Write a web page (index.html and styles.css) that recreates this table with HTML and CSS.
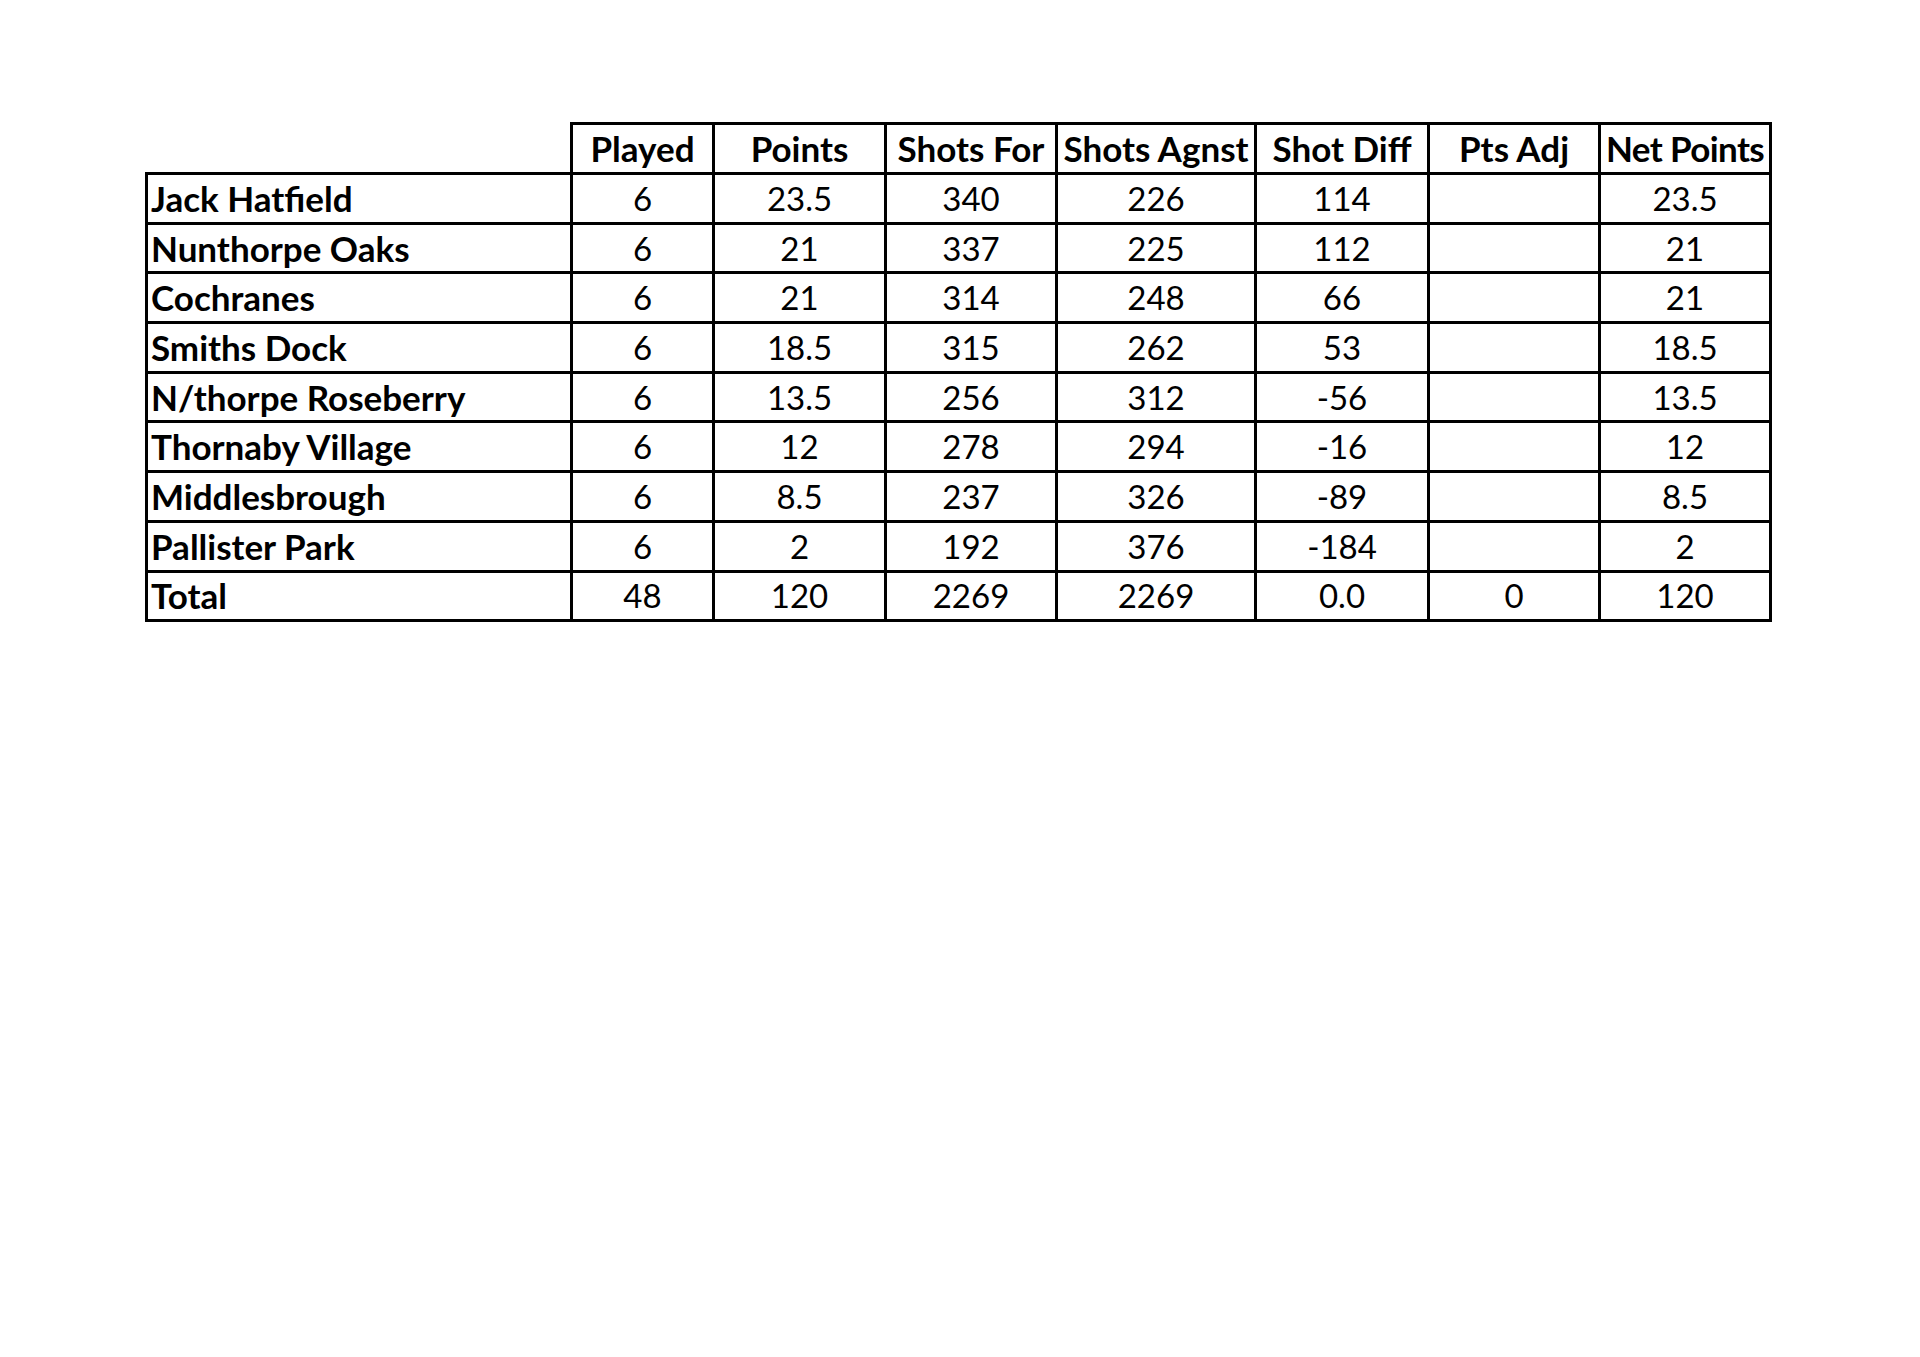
FILE: index.html
```html
<!DOCTYPE html>
<html lang="en">
<head>
<meta charset="utf-8">
<title>League Table</title>
<link rel="stylesheet" href="styles.css">
</head>
<body>
<main class="page">
<table class="league">
  <colgroup>
    <col class="c-name"><col class="c-played"><col class="c-points"><col class="c-for"><col class="c-agnst"><col class="c-diff"><col class="c-adj"><col class="c-net">
  </colgroup>
  <thead>
    <tr class="head">
      <th class="blank"></th>
      <th>Played</th>
      <th>Points</th>
      <th>Shots For</th>
      <th>Shots Agnst</th>
      <th>Shot Diff</th>
      <th>Pts Adj</th>
      <th class="tight">Net Points</th>
    </tr>
  </thead>
  <tbody>
    <tr><th class="team">Jack Hatfield</th><td>6</td><td>23.5</td><td>340</td><td>226</td><td>114</td><td></td><td>23.5</td></tr>
    <tr><th class="team">Nunthorpe Oaks</th><td>6</td><td>21</td><td>337</td><td>225</td><td>112</td><td></td><td>21</td></tr>
    <tr><th class="team">Cochranes</th><td>6</td><td>21</td><td>314</td><td>248</td><td>66</td><td></td><td>21</td></tr>
    <tr><th class="team">Smiths Dock</th><td>6</td><td>18.5</td><td>315</td><td>262</td><td>53</td><td></td><td>18.5</td></tr>
    <tr><th class="team">N/thorpe Roseberry</th><td>6</td><td>13.5</td><td>256</td><td>312</td><td>-56</td><td></td><td>13.5</td></tr>
    <tr><th class="team">Thornaby Village</th><td>6</td><td>12</td><td>278</td><td>294</td><td>-16</td><td></td><td>12</td></tr>
    <tr><th class="team">Middlesbrough</th><td>6</td><td>8.5</td><td>237</td><td>326</td><td>-89</td><td></td><td>8.5</td></tr>
    <tr><th class="team">Pallister Park</th><td>6</td><td>2</td><td>192</td><td>376</td><td>-184</td><td></td><td>2</td></tr>
    <tr><th class="team">Total</th><td>48</td><td>120</td><td>2269</td><td>2269</td><td>0.0</td><td>0</td><td>120</td></tr>
  </tbody>
</table>
</main>
</body>
</html>
```

FILE: styles.css
```css
html, body {
  margin: 0;
  padding: 0;
  background: #ffffff;
}

.page {
  padding: 122px 0 0 145px;
  font-family: Lato, "Open Sans", "Liberation Sans", sans-serif;
  color: #000000;
}

.league {
  border-collapse: separate;
  border-spacing: 0;
  table-layout: fixed;
  width: 1627px;
}

.c-name { width: 428px; }
.c-played { width: 142px; }
.c-points { width: 172px; }
.c-for { width: 171px; }
.c-agnst { width: 199px; }
.c-diff { width: 173px; }
.c-adj { width: 171px; }
.c-net { width: 171px; }

.league th,
.league td {
  box-sizing: border-box;
  height: 49.7px;
  padding: 0 0 1px 0;
  border-right: 3px solid #000;
  border-bottom: 3px solid #000;
  font-size: 33px;
  line-height: 40px;
  text-align: center;
  vertical-align: middle;
  white-space: nowrap;
  overflow: hidden;
}

.league td {
  font-weight: 400;
}

.league th {
  font-weight: 700;
  font-size: 35px;
}

.head th {
  height: 53px;
  border-top: 3px solid #000;
}

.head th.blank {
  border-top: none;
  border-right: 3px solid #000;
}

.head th.tight {
  letter-spacing: -0.6px;
}

.league th.team {
  text-align: left;
  padding-left: 3px;
  border-left: 3px solid #000;
}
```
